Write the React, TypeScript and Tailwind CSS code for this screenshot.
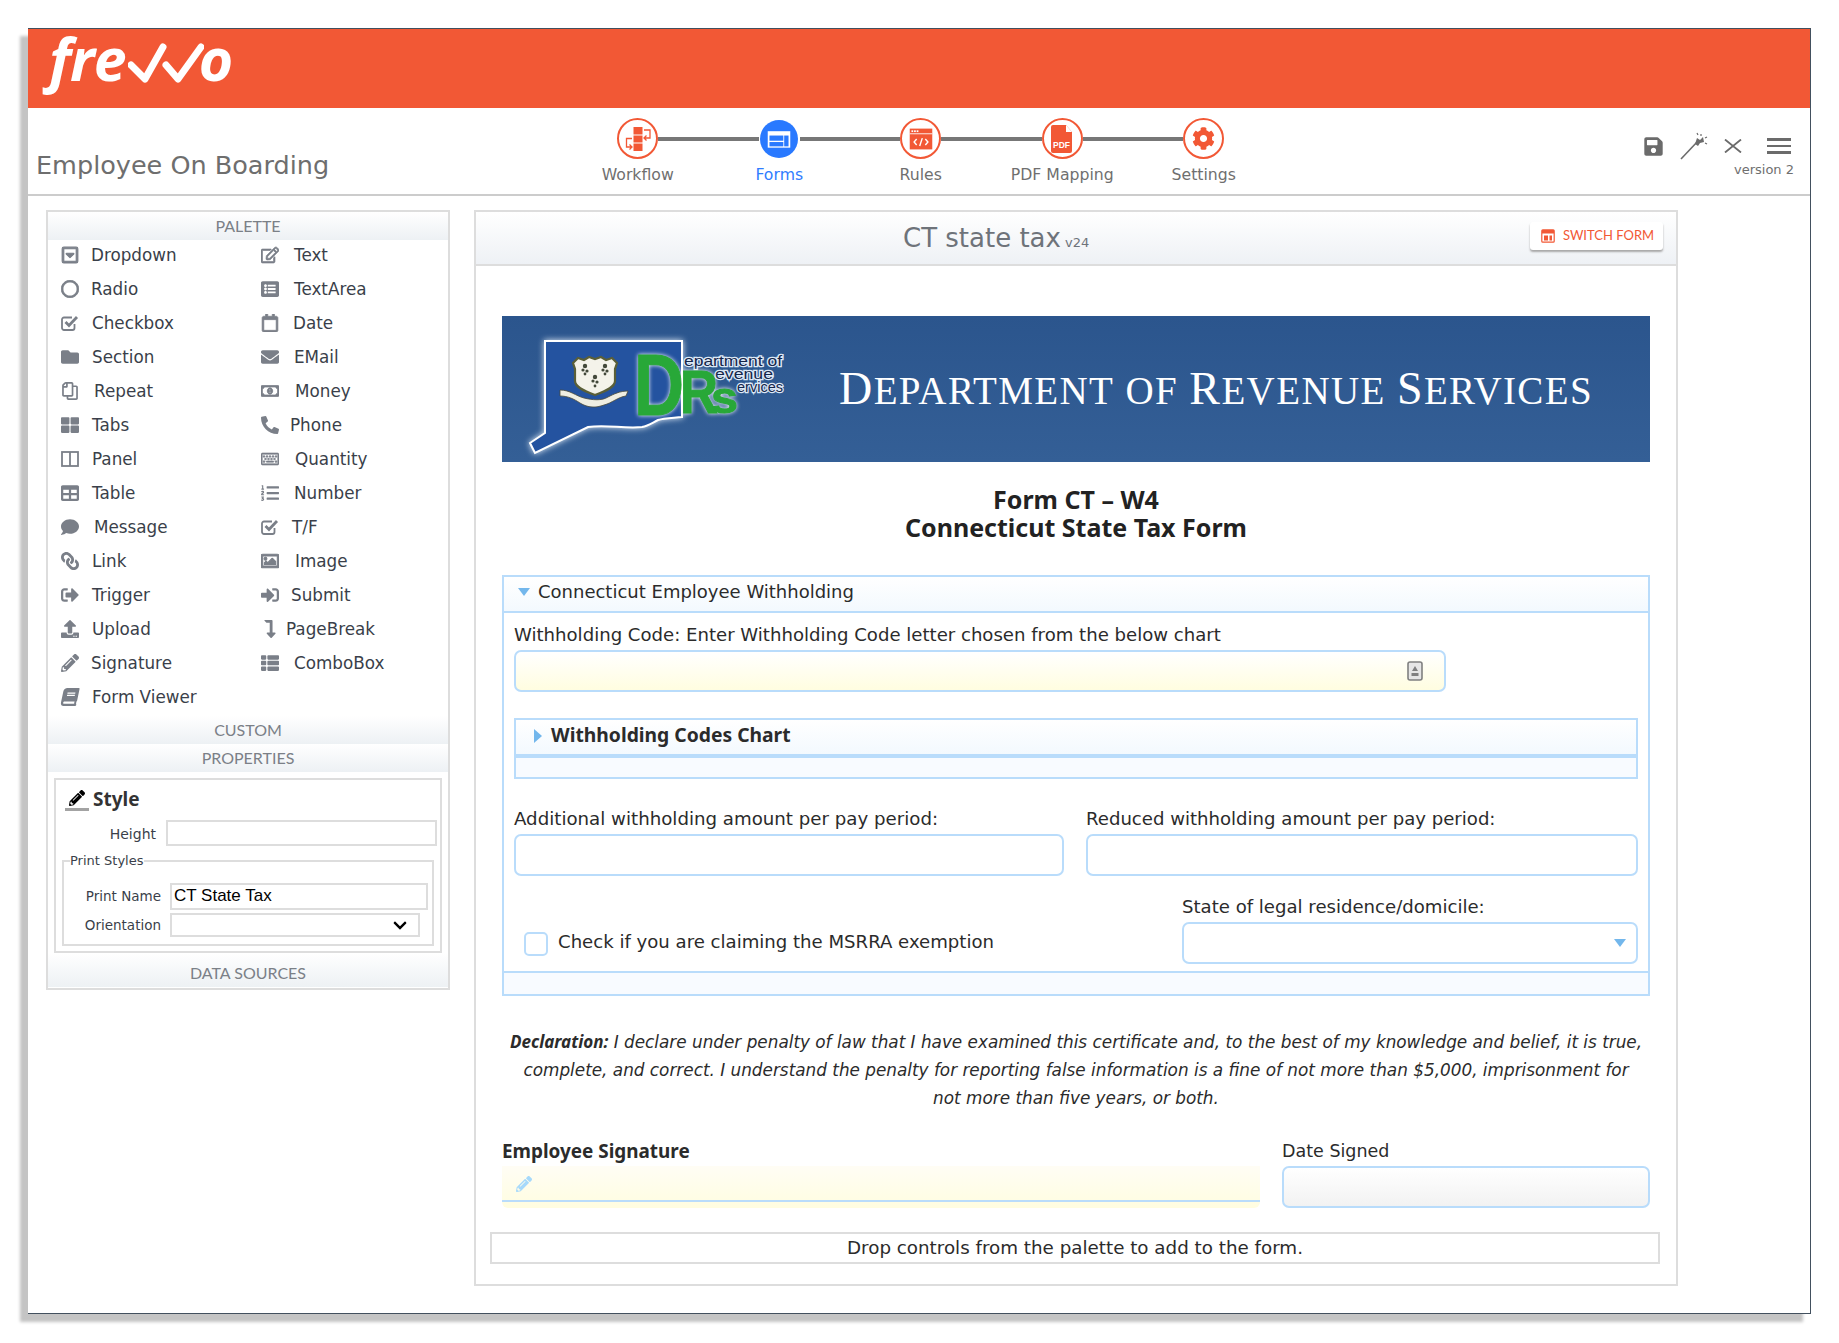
import React from 'react';
import {
  FaBook, FaComment, FaEnvelope, FaFolder, FaLevelDownAlt, FaLink, FaListAlt, FaListOl, FaPencilAlt, FaPhone,
  FaRegCalendar, FaRegCaretSquareDown, FaRegCircle, FaRegCopy, FaRegEdit, FaRegImage, FaRegKeyboard,
  FaRegMoneyBillAlt, FaSave, FaSignOutAlt, FaSignInAlt, FaTable, FaThLarge, FaThList, FaUpload, FaCog, FaChevronDown,
} from 'react-icons/fa';

const CheckIcon = ({ className = '' }: { className?: string }) => (
  <svg viewBox="0 0 18 18" className={className}>
    <path d="M13.5 10v4a2 2 0 0 1-2 2H3a2 2 0 0 1-2-2V5.5a2 2 0 0 1 2-2h8" fill="none" stroke="currentColor" strokeWidth="1.8" />
    <path d="M4.5 8l3.5 3.5L16 3" fill="none" stroke="currentColor" strokeWidth="2.8" />
  </svg>
);

const PanelIcon = ({ className = '' }: { className?: string }) => (
  <svg viewBox="0 0 18 18" className={className}>
    <rect x="1" y="2" width="16" height="14" fill="none" stroke="currentColor" strokeWidth="1.8" />
    <path d="M9 2v14" stroke="currentColor" strokeWidth="1.8" />
  </svg>
);

// label column offsets follow the icon widths of the original palette
type Item = { label: string; Icon: React.ComponentType<{ className?: string }>; w: string; extra?: string };

const leftItems: Item[] = [
  { label: 'Dropdown', Icon: FaRegCaretSquareDown, w: 'w-[30px]', extra: 'stroke-[30]' },
  { label: 'Radio', Icon: FaRegCircle, w: 'w-[30px]', extra: 'stroke-[25]' },
  { label: 'Checkbox', Icon: CheckIcon, w: 'w-[31px]' },
  { label: 'Section', Icon: FaFolder, w: 'w-[31px]' },
  { label: 'Repeat', Icon: FaRegCopy, w: 'w-[33px]', extra: '-scale-x-100' },
  { label: 'Tabs', Icon: FaThLarge, w: 'w-[31px]' },
  { label: 'Panel', Icon: PanelIcon, w: 'w-[31px]' },
  { label: 'Table', Icon: FaTable, w: 'w-[31px]' },
  { label: 'Message', Icon: FaComment, w: 'w-[33px]' },
  { label: 'Link', Icon: FaLink, w: 'w-[31px]', extra: '-scale-x-100' },
  { label: 'Trigger', Icon: FaSignOutAlt, w: 'w-[31px]' },
  { label: 'Upload', Icon: FaUpload, w: 'w-[31px]' },
  { label: 'Signature', Icon: FaPencilAlt, w: 'w-[30px]' },
  { label: 'Form Viewer', Icon: FaBook, w: 'w-[31px]', extra: '-skew-x-12' },
];

const rightItems: Item[] = [
  { label: 'Text', Icon: FaRegEdit, w: 'w-[33px]', extra: 'stroke-[20]' },
  { label: 'TextArea', Icon: FaListAlt, w: 'w-[33px]' },
  { label: 'Date', Icon: FaRegCalendar, w: 'w-[32px]', extra: 'stroke-[20]' },
  { label: 'EMail', Icon: FaEnvelope, w: 'w-[33px]' },
  { label: 'Money', Icon: FaRegMoneyBillAlt, w: 'w-[34px]', extra: 'stroke-[30]' },
  { label: 'Phone', Icon: FaPhone, w: 'w-[29px]', extra: '-scale-x-100' },
  { label: 'Quantity', Icon: FaRegKeyboard, w: 'w-[34px]', extra: 'stroke-[20]' },
  { label: 'Number', Icon: FaListOl, w: 'w-[33px]' },
  { label: 'T/F', Icon: CheckIcon, w: 'w-[31px]' },
  { label: 'Image', Icon: FaRegImage, w: 'w-[34px]', extra: 'stroke-[30]' },
  { label: 'Submit', Icon: FaSignInAlt, w: 'w-[30px]' },
  { label: 'PageBreak', Icon: FaLevelDownAlt, w: 'w-[25px]' },
  { label: 'ComboBox', Icon: FaThList, w: 'w-[33px]' },
];

const PanelHeader = ({ children, className = 'h-[28px]' }: { children: React.ReactNode; className?: string }) => (
  <div className={`${className} flex items-center justify-center bg-gradient-to-b from-white to-[#edf1f4] font-['Lato',sans-serif] text-[16px] text-[#7b8087]`}>
    {children}
  </div>
);

const PaletteItem = ({ item }: { item: Item }) => (
  <div className="h-[34px] flex items-center text-[16.8px] text-[#3a3f4a]">
    <span className={`${item.w} shrink-0 flex items-center -mt-[2px]`}>
      <item.Icon className={`w-[18px] h-[18px] text-[#7a7f88] ${item.extra ?? ''}`} />
    </span>
    {item.label}
  </div>
);

const WorkflowGlyph = () => (
  <svg viewBox="0 0 30 30" className="w-[30px] h-[30px]">
    <rect x="10.5" y="3" width="9" height="7.5" fill="#f25835" />
    <rect x="10.5" y="11.5" width="9" height="7" fill="#f25835" />
    <rect x="10.5" y="19.5" width="9" height="7.5" fill="#f25835" />
    <path d="M21 6h6v8h-6M23.5 11.5L21 14l2.5 2.5M9 14.5H3.5V23H9M6.5 20.5L9 23l-2.5 2.5" fill="none" stroke="#f25835" strokeWidth="1.3" />
  </svg>
);

const FormsGlyph = () => (
  <svg viewBox="0 0 30 30" className="w-[26px] h-[26px]">
    <rect x="2" y="6" width="26" height="19" fill="#fff" />
    <rect x="4" y="11" width="16" height="6" fill="#2979ff" />
    <rect x="4" y="18.5" width="16" height="5" fill="#2979ff" />
    <rect x="21" y="11" width="5" height="12.5" fill="#2979ff" />
  </svg>
);

const RulesGlyph = () => (
  <svg viewBox="0 0 30 30" className="w-[26px] h-[26px]">
    <rect x="2" y="3" width="26" height="24" fill="#f25835" />
    <rect x="4" y="5" width="2" height="2" fill="#fff" />
    <rect x="7" y="5" width="2" height="2" fill="#fff" />
    <rect x="10" y="5" width="2" height="2" fill="#fff" />
    <rect x="2" y="8.5" width="26" height="1" fill="#fff" />
    <path d="M10 15l-3 3.5 3 3.5M20 15l3 3.5-3 3.5M16.5 14l-3 9" fill="none" stroke="#fff" strokeWidth="1.6" />
  </svg>
);

const PdfGlyph = () => (
  <svg viewBox="0 0 30 30" className="w-[30px] h-[30px]">
    <path d="M6 1h13l6 7v19a2 2 0 0 1-2 2H6a2 2 0 0 1-2-2V3a2 2 0 0 1 2-2z" fill="#f25835" />
    <path d="M19 1v7h6z" fill="#fff" />
    <text x="14.5" y="24" textAnchor="middle" fontFamily="Liberation Sans, sans-serif" fontWeight="700" fontSize="8.5" fill="#fff">PDF</text>
  </svg>
);

const steps = [
  { label: 'Workflow', glyph: <WorkflowGlyph /> },
  { label: 'Forms', glyph: <FormsGlyph />, active: true },
  { label: 'Rules', glyph: <RulesGlyph /> },
  { label: 'PDF Mapping', glyph: <PdfGlyph /> },
  { label: 'Settings', glyph: <FaCog className="w-[23px] h-[23px] text-[#f25835]" /> },
];

const Logo = () => (
  <div className="flex items-start h-full pl-[21px] text-white font-['Open_Sans',sans-serif] italic font-bold text-[59px] leading-none tracking-[-1px]">
    <span>fre</span>
    <svg viewBox="0 0 76 41" className="w-[76px] h-[41px] mt-[14px] ml-[2px] shrink-0">
      <path d="M3 22l14 14L35 4M38 22l12 14L73 4" fill="none" stroke="#fff" strokeWidth="7" strokeLinecap="round" strokeLinejoin="round" />
    </svg>
    <span className="-ml-[5px]">o</span>
  </div>
);

const DrsLogo = () => (
  <svg viewBox="0 0 300 146" className="w-[300px] h-[146px] shrink-0">
    <path
      d="M43 25H180V101C170 102 162 102 156 104C150 107 146 110 140 111C122 113 104 108 86 111L33 137L28 127L43 117Z"
      fill="#2453a0"
      stroke="#fff"
      strokeWidth="2"
      style={{ filter: 'drop-shadow(0 0 3px #dfeaf6)' }}
    />
    {/* state seal */}
    <path d="M58 74c10 0 16 6 24 8 8 2 18 3 24-1 6-3 12-6 20-6l-2 5c-8 1-14 7-22 9-8 3-16 3-24-2-6-4-12-7-20-7z" fill="#efeee2" stroke="#4a4a3a" strokeWidth="0.8" />
    <path d="M71 47l5-5 6 2 5-3 6 2 6-2 5 3 6-2 5 5-2 6v12c0 6-9 10-20 14-11-4-20-8-20-14V53z" fill="#f4f3ea" stroke="#5a5f38" strokeWidth="2.2" />
    <g fill="#43493a">
      <circle cx="83" cy="50" r="2.2" /><circle cx="81" cy="54" r="1.6" /><circle cx="85" cy="55" r="1.6" /><circle cx="83" cy="58" r="1.4" />
      <circle cx="103" cy="50" r="2.2" /><circle cx="101" cy="54" r="1.6" /><circle cx="105" cy="55" r="1.6" /><circle cx="103" cy="58" r="1.4" />
      <circle cx="93" cy="61" r="2.2" /><circle cx="91" cy="65" r="1.6" /><circle cx="95" cy="66" r="1.6" /><circle cx="93" cy="70" r="1.4" />
    </g>
    <g fontFamily="Liberation Sans, sans-serif" fontSize="15" fill="#14264a" stroke="#dce8f6" strokeWidth="2.5" paintOrder="stroke" dominantBaseline="middle">
      <text x="182" y="46" textLength="98" lengthAdjust="spacingAndGlyphs">epartment of</text>
      <text x="213" y="59" textLength="58" lengthAdjust="spacingAndGlyphs">evenue</text>
      <text x="235" y="72" textLength="46" lengthAdjust="spacingAndGlyphs">ervices</text>
    </g>
    <g fontFamily="Liberation Sans, sans-serif" fontWeight="700" fill="#28a838" stroke="#28a838" strokeWidth="1" style={{ filter: 'drop-shadow(0 0 2px #fff)' }}>
      <text x="132" y="99" fontSize="88" textLength="50" lengthAdjust="spacingAndGlyphs">D</text>
      <text x="178" y="97" fontSize="61" textLength="38" lengthAdjust="spacingAndGlyphs">R</text>
      <text x="209" y="97" fontSize="44" textLength="27" lengthAdjust="spacingAndGlyphs">s</text>
    </g>
  </svg>
);

const Triangle = ({ dir }: { dir: 'down' | 'right' }) =>
  dir === 'down' ? (
    <svg viewBox="0 0 12 8" className="w-[12px] h-[8px]"><path d="M0 0h12L6 8z" fill="#73b7ec" /></svg>
  ) : (
    <svg viewBox="0 0 8 14" className="w-[8px] h-[14px]"><path d="M0 0l8 7-8 7z" fill="#73b7ec" /></svg>
  );

const FieldBox = ({ className = '' }: { className?: string }) => (
  <div className={`h-[42px] border-2 border-[#b9dcfb] rounded-[7px] bg-white ${className}`} />
);

export default function App() {
  return (
    <div className="min-h-[1343px] bg-white pt-[28px] pl-[28px] font-['DejaVu_Sans',sans-serif]">
      <div className="w-[1783px] h-[1286px] bg-white border-t border-r border-b border-[#42505e] shadow-[-8px_8px_3px_#c4c4c4]">
        <div className="h-[79px] bg-[#f25835]">
          <Logo />
        </div>

        <div className="h-[88px] border-b-2 border-[#cccccc] flex relative">
          <div className="w-[539px] pl-[8px] pt-[39px] text-[25.5px] leading-[36px] text-[#6e6e6e] shrink-0">Employee On Boarding</div>
          <div className="pt-[10px]">
            <div className="flex items-center pl-[50px] h-[41px]">
              {steps.map((s, i) => (
                <React.Fragment key={s.label}>
                  {i > 0 && <div className="w-[100.5px] h-[4px] bg-[#777777]" />}
                  {s.active ? (
                    <div className="w-[38px] h-[38px] mx-[1.5px] rounded-full flex items-center justify-center bg-[#2979ff]">{s.glyph}</div>
                  ) : (
                    <div className="w-[41px] h-[41px] rounded-full flex items-center justify-center border-[2.5px] bg-white border-[#f25835]">{s.glyph}</div>
                  )}
                </React.Fragment>
              ))}
            </div>
            <div className="flex mt-[4px]">
              {steps.map(s => (
                <div key={s.label} className={`w-[141.5px] text-center text-[15.7px] leading-[24px] ${s.active ? 'text-[#2f7cff]' : 'text-[#6f6f6f]'}`}>{s.label}</div>
              ))}
            </div>
          </div>
          <div className="absolute right-[16px] top-[24px] flex flex-col items-end">
            <div className="flex items-center h-[28px]">
              <FaSave className="w-[21px] h-[21px] text-[#6b6b6b] -ml-[1px]" />
              <svg viewBox="0 0 30 28" className="w-[30px] h-[28px] ml-[15px]">
                <path d="M2 27L19 9" stroke="#6b6b6b" strokeWidth="1.6" />
                <path d="M16 12l2-6 3 2 3-3 1 5-4 1-2 3z" fill="#6b6b6b" />
                <path d="M22 2v2M28 5l-2 1M28 12l-2-1M18 1l1 2" stroke="#6b6b6b" strokeWidth="1.2" />
              </svg>
              <svg viewBox="0 0 18 14" className="w-[18px] h-[14px] ml-[15px]">
                <path d="M1 0.5l16 13M17 0.5L1 13.5" stroke="#6b6b6b" strokeWidth="1.8" />
              </svg>
              <div className="ml-[25px] mr-[3px] w-[24px] flex flex-col gap-[4px]">
                <div className="h-[2.5px] bg-[#6b6b6b]" />
                <div className="h-[2.5px] bg-[#6b6b6b]" />
                <div className="h-[2.5px] bg-[#6b6b6b]" />
              </div>
            </div>
            <div className="text-[13px] leading-[20px] text-[#6f6f6f]">version 2</div>
          </div>
        </div>

        <div className="flex items-start pt-[14px] pl-[18px] gap-[24px]">
          {/* Palette and properties */}
          <div className="w-[404px] h-[780px] border-2 border-[#dddddd] shrink-0">
            <PanelHeader>PALETTE</PanelHeader>
            <div className="flex h-[476px] pl-[13px]">
              <div className="w-[200px] -mt-[1px]">
                {leftItems.map(item => <PaletteItem key={item.label} item={item} />)}
              </div>
              <div className="-mt-[1px]">
                {rightItems.map(item => <PaletteItem key={item.label} item={item} />)}
              </div>
            </div>
            <PanelHeader>CUSTOM</PanelHeader>
            <PanelHeader>PROPERTIES</PanelHeader>
            <div className="mx-[6px] mt-[6px] h-[175px] border-2 border-[#dddddd] px-[6px]">
              <div className="flex items-center h-[38px] pl-[3px] text-[19px] font-bold font-['Noto_Sans',sans-serif] text-[#333333]">
                <span className="w-[24px] h-[24px] border-b-[3px] border-[#a3a3a3] flex items-center justify-center mr-[4px]">
                  <FaPencilAlt className="w-[16px] h-[16px] text-black" />
                </span>
                Style
              </div>
              <div className="flex items-center h-[26px] mt-[2px]">
                <span className="w-[94px] pt-[3px] text-right text-[14px] text-[#3a3f4a]">Height</span>
                <div className="ml-[10px] flex-1 h-[26px] border-2 border-[#dddddd] -mr-[3px]" />
              </div>
              <fieldset className="mt-[6px] w-[372px] h-[94px] border-2 border-[#dddddd] pl-[6px] pr-[4px]">
                <legend className="text-[13px] leading-[18px] text-[#3a3f4a] pr-[1px]">Print Styles</legend>
                <div className="flex items-center h-[27px] mt-[13px]">
                  <span className="w-[91px] text-right text-[13.5px] text-[#3a3f4a] shrink-0">Print Name</span>
                  <div className="ml-[9px] w-[258px] h-[27px] border-2 border-[#dddddd] pl-[2px] font-['Liberation_Sans',sans-serif] text-[17px] leading-[22px] text-black">CT State Tax</div>
                </div>
                <div className="flex items-center h-[24px] mt-[3px]">
                  <span className="w-[91px] text-right text-[13.5px] text-[#3a3f4a] shrink-0">Orientation</span>
                  <div className="ml-[9px] w-[250px] h-[24px] border-2 border-[#dddddd] flex items-center justify-end pr-[7px]">
                    <FaChevronDown className="w-[22px] h-[15px] text-black" />
                  </div>
                </div>
              </fieldset>
            </div>
            <PanelHeader className="h-[34px] pt-[5px]">DATA SOURCES</PanelHeader>
          </div>

          {/* Form canvas */}
          <div className="w-[1204px] h-[1076px] border-2 border-[#dddddd] shrink-0">
            <div className="h-[54px] border-b-2 border-[#dddddd] bg-gradient-to-b from-white to-[#eef1f5] flex items-center pl-[427px] pt-[1px] relative text-[#6e737a]">
              <span className="text-[26px] whitespace-nowrap">CT state tax<span className="text-[13px] ml-[4px]">v24</span></span>
              <button className="absolute right-[13px] top-[10px] w-[133px] h-[28px] pl-[2px] bg-white rounded-[3px] shadow-[0_2px_2px_#a8a8a8] flex items-center justify-center gap-[8px] text-[13px] text-[#f25835] font-['Lato',sans-serif]">
                <svg viewBox="0 0 14 14" className="w-[14px] h-[14px]">
                  <rect x="0.8" y="0.8" width="12.4" height="12.4" rx="1" fill="none" stroke="#f25835" strokeWidth="1.2" />
                  <rect x="1" y="1" width="12" height="3.5" fill="#f25835" />
                  <rect x="3" y="6.5" width="4" height="5" fill="#f25835" />
                  <rect x="8.5" y="6.5" width="2.5" height="5" fill="#f25835" />
                </svg>
                SWITCH FORM
              </button>
            </div>

            <div className="pl-[26px]">
              <div className="w-[1148px] h-[146px] mt-[50px] bg-gradient-to-b from-[#2b558d] to-[#345f96] flex items-center">
                <DrsLogo />
                <div className="ml-[37px] font-['Liberation_Serif',serif] text-[39px] leading-none tracking-[1.4px] text-white whitespace-nowrap">
                  <span className="inline-block first-letter:text-[46px]">DEPARTMENT</span>{' '}
                  <span className="inline-block">OF</span>{' '}
                  <span className="inline-block first-letter:text-[46px]">REVENUE</span>{' '}
                  <span className="inline-block first-letter:text-[46px]">SERVICES</span>
                </div>
              </div>

              <div className="w-[1148px] mt-[23px] text-center font-['Noto_Sans',sans-serif] text-[25px] leading-[28px] font-bold text-[#222222]">
                <div>Form CT – W4</div>
                <div>Connecticut State Tax Form</div>
              </div>

              {/* Withholding section */}
              <div className="w-[1148px] h-[421px] mt-[34px] border-2 border-[#b9dcfb] flex flex-col text-[#2b2b2b]">
                <div className="h-[36px] pb-[5px] border-b-2 border-[#b9dcfb] bg-gradient-to-b from-white to-[#f3f9fe] flex items-center pl-[14px] text-[18px]">
                  <Triangle dir="down" />
                  <span className="ml-[8px]">Connecticut Employee Withholding</span>
                </div>
                <div className="flex-1 px-[10px]">
                  <div className="text-[18.1px] leading-[24px] mt-[10px]">Withholding Code: Enter Withholding Code letter chosen from the below chart</div>
                  <div className="w-[932px] h-[42px] mt-[3px] border-2 border-[#b9dcfb] rounded-[7px] bg-gradient-to-b from-white to-[#fffde0] flex items-center justify-end pr-[21px]">
                    <svg viewBox="0 0 16 20" className="w-[16px] h-[20px]">
                      <rect x="1" y="1" width="14" height="18" rx="2" fill="#e6e6e6" stroke="#808080" strokeWidth="1.6" />
                      <path d="M8 5l3 5H5z" fill="#808080" />
                      <rect x="4.5" y="12" width="7" height="3" fill="#808080" />
                    </svg>
                  </div>
                  <div className="w-[1124px] h-[61px] mt-[26px] border-2 border-[#b9dcfb] bg-[#f8fbff] flex flex-col">
                    <div className="h-[34px] pb-[3px] flex items-center pl-[18px] bg-gradient-to-b from-white to-[#f3f9fe] font-['Noto_Sans',sans-serif] text-[19.3px] font-bold">
                      <Triangle dir="right" />
                      <span className="ml-[9px]">Withholding Codes Chart</span>
                    </div>
                    <div className="h-[4px] bg-[#b9dcfb]" />
                  </div>
                  <div className="flex gap-[22px] mt-[28px]">
                    <div className="w-[550px]">
                      <div className="text-[18.2px] leading-[24px]">Additional withholding amount per pay period:</div>
                      <FieldBox className="mt-[3px]" />
                    </div>
                    <div className="w-[552px]">
                      <div className="text-[18.1px] leading-[24px]">Reduced withholding amount per pay period:</div>
                      <FieldBox className="mt-[3px]" />
                    </div>
                  </div>
                  <div className="flex items-end mt-[19px]">
                    <div className="w-[668px] h-[42px] flex items-center pl-[10px] text-[18.1px]">
                      <div className="w-[24px] h-[24px] border-2 border-[#b9dcfb] rounded-[5px] mt-[1px]" />
                      <span className="ml-[10px] -mt-[3px]">Check if you are claiming the MSRRA exemption</span>
                    </div>
                    <div className="w-[456px]">
                      <div className="text-[18.1px] leading-[24px]">State of legal residence/domicile:</div>
                      <div className="h-[42px] mt-[3px] border-2 border-[#b9dcfb] rounded-[7px] flex items-center justify-end pr-[10px]">
                        <Triangle dir="down" />
                      </div>
                    </div>
                  </div>
                </div>
                <div className="h-[23px] border-t-2 border-[#b9dcfb] bg-[#f8fbff]" />
              </div>

              <p className="w-[1148px] mt-[32px] text-center italic text-[16.85px] leading-[28px] text-[#2b2b2b] whitespace-nowrap">
                <b className="font-['Noto_Sans',sans-serif] text-[17px]">Declaration:</b> I declare under penalty of law that I have examined this certificate and, to the best of my knowledge and belief, it is true,
                <br />complete, and correct. I understand the penalty for reporting false information is a fine of not more than $5,000, imprisonment for
                <br />not more than five years, or both.
              </p>

              <div className="flex gap-[22px] mt-[28px] text-[17.5px] text-[#2b2b2b]">
                <div className="w-[758px]">
                  <div className="leading-[22px] pb-[4px] font-bold font-['Noto_Sans',sans-serif] text-[18.9px]">Employee Signature</div>
                  <div className="h-[42px] bg-gradient-to-b from-[#fffdf5] to-[#fffde0] rounded-b-[6px] flex flex-col">
                    <div className="h-[34px] flex items-center pl-[14px] pt-[2px]">
                      <FaPencilAlt className="w-[16px] h-[18px] text-[#a6d9fb]" />
                    </div>
                    <div className="h-[2px] bg-[#b9dcfb]" />
                  </div>
                </div>
                <div className="w-[368px]">
                  <div className="leading-[22px] pb-[4px]">Date Signed</div>
                  <div className="h-[42px] border-2 border-[#b9dcfb] rounded-[7px] bg-gradient-to-b from-white to-[#f2f2f2]" />
                </div>
              </div>

              <div className="w-[1170px] h-[32px] pb-[1px] mt-[24px] -ml-[12px] border-2 border-[#dddddd] flex items-center justify-center text-[18.3px] text-[#2b2b2b]">
                Drop controls from the palette to add to the form.
              </div>
            </div>
          </div>
        </div>
      </div>
    </div>
  );
}
